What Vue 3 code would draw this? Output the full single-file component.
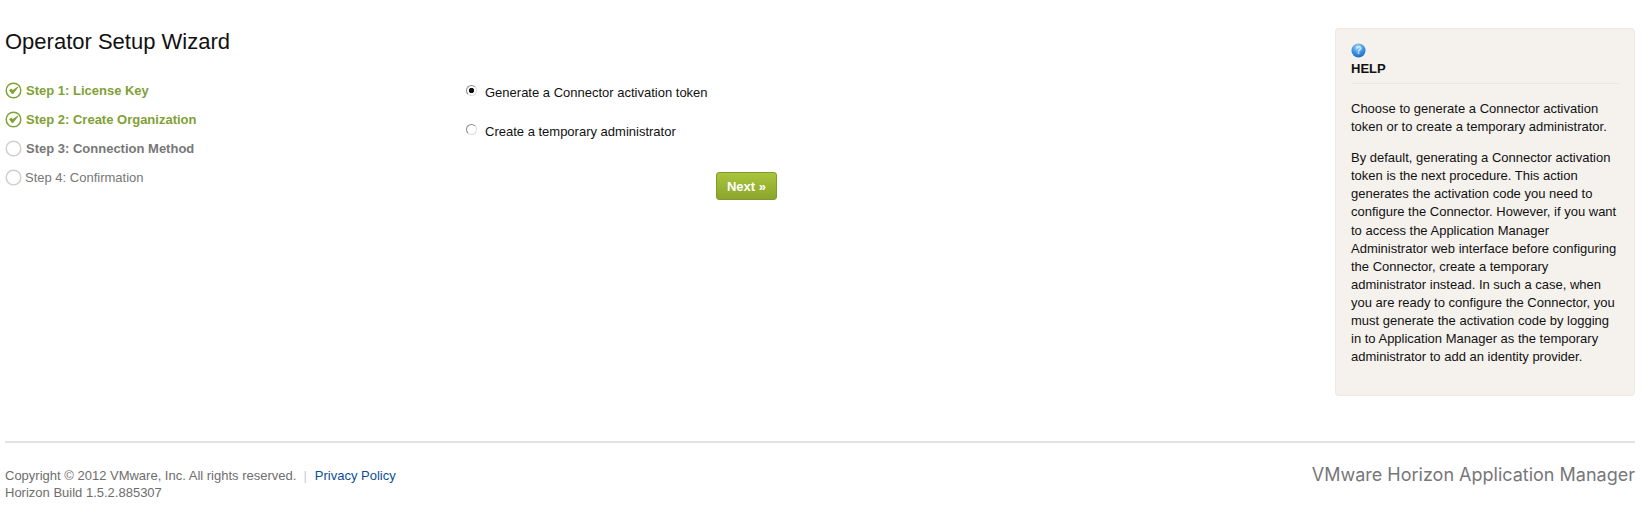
<template>
    <div class="page">
        <div class="main">
            <div class="wizard">
                <h1>Operator Setup Wizard</h1>
                <div class="columns">
                    <!-- STEPS -->
                    <ul class="steps">
                        <li v-for="step in steps" :key="step.label" class="step" :class="step.state">
                            <svg class="stepIcon" width="17" height="17" viewBox="0 0 17 17">
                                <circle cx="8.5" cy="8.5" r="7.3" fill="#fff" stroke-width="1.5" />
                                <path v-if="step.state === 'done'" d="M4.6 8.4 L7.5 12 L13 5 L7.7 8.6 L6.3 7 Z" fill="#7fa136" stroke="#7fa136" stroke-width="1" stroke-linejoin="round" />
                            </svg>
                            <span>{{ step.label }}</span>
                        </li>
                    </ul>
                    <!-- FORM -->
                    <form class="form" @submit.prevent>
                        <label class="option" v-for="o in options" :key="o.value">
                            <input type="radio" name="method" :value="o.value" v-model="method">
                            <span class="radio" :class="{ on: method === o.value }"></span>
                            <span>{{ o.label }}</span>
                        </label>
                        <button class="next" type="submit">Next »</button>
                    </form>
                </div>
            </div>
            <!-- HELP -->
            <aside class="help">
                <svg class="helpIcon" width="15" height="15" viewBox="0 0 15 15">
                    <defs>
                        <radialGradient id="helpBall" cx="45%" cy="25%" r="80%">
                            <stop offset="0" stop-color="#a8d8fb" />
                            <stop offset="0.55" stop-color="#3b93e4" />
                            <stop offset="1" stop-color="#1a62bd" />
                        </radialGradient>
                    </defs>
                    <circle cx="7.5" cy="7.5" r="7" fill="url(#helpBall)" />
                    <text x="7.5" y="11" text-anchor="middle" class="helpMark">?</text>
                </svg>
                <h2>HELP</h2>
                <p class="first">Choose to generate a Connector activation token or to create a temporary administrator.</p>
                <p>By default, generating a Connector activation token is the next procedure. This action generates the activation code you need to configure the Connector. However, if you want to access the Application Manager Administrator web interface before configuring the Connector, create a temporary administrator instead. In such a case, when you are ready to configure the Connector, you must generate the activation code by logging in to Application Manager as the temporary administrator to add an identity provider.</p>
            </aside>
        </div>
        <!-- FOOTER -->
        <footer class="footer">
            <div class="legal">
                <div>Copyright © 2012 VMware, Inc. All rights reserved.<span class="sep">|</span><a href="#">Privacy Policy</a></div>
                <div>Horizon Build 1.5.2.885307</div>
            </div>
            <div class="brand">VMware Horizon Application Manager</div>
        </footer>
    </div>
</template>

<script setup>
import { ref } from 'vue'

const method = ref('token')

const steps = [
    { label: 'Step 1: License Key', state: 'done' },
    { label: 'Step 2: Create Organization', state: 'done' },
    { label: 'Step 3: Connection Method', state: 'current' },
    { label: 'Step 4: Confirmation', state: 'todo' },
]

const options = [
    { value: 'token', label: 'Generate a Connector activation token' },
    { value: 'admin', label: 'Create a temporary administrator' },
]
</script>

<style>
html, body {
    margin: 0;
    background: #fff;
}
</style>

<style scoped>
.page {
    width: 1649px;
    box-sizing: border-box;
    padding: 28px 14px 0 5px;
    font-family: "Liberation Sans", Arial, sans-serif;
    font-size: 12px;
    color: #000;
}

.main {
    display: flex;
    justify-content: space-between;
    align-items: flex-start;
}

.wizard {
    flex: 1;
}

h1 {
    margin: 0;
    padding-top: 1px;
    font-size: 22px;
    font-weight: normal;
    line-height: 26px;
    color: #111;
}

.columns {
    display: flex;
    margin-top: 21px;
}

.steps {
    list-style: none;
    margin: 0;
    padding: 0;
    width: 461px;
}

.step {
    display: flex;
    align-items: center;
    gap: 4px;
    height: 29px;
    font-size: 13px;
    font-weight: bold;
}

.stepIcon {
    flex: none;
}

.done {
    color: #7fa136;
}

.done circle {
    stroke: #7fa136;
}

.current {
    color: #777;
}

.current circle,
.todo circle {
    stroke: #cfcfcf;
}

.todo {
    color: #777;
    font-weight: normal;
    gap: 3px;
}

.form {
    display: flex;
    flex-direction: column;
    width: 311px;
    margin-top: -3px;
}

.option {
    display: flex;
    align-items: center;
    gap: 8px;
    height: 39px;
    font-size: 13px;
    color: #111;
}

.option input {
    display: none;
}

.radio {
    width: 9px;
    height: 9px;
    border-radius: 50%;
    border: 1px solid #8a8a8a;
    border-right-color: #ddd;
    border-bottom-color: #ddd;
    background: #fff;
    position: relative;
    top: -2px;
}

.radio.on {
    background: radial-gradient(circle, #111 0 2.4px, #fff 3px);
}

.next {
    align-self: flex-end;
    width: 61px;
    height: 28px;
    margin-top: 21px;
    padding: 0;
    border: 1px solid #7f9a2e;
    border-radius: 3px;
    background: linear-gradient(#a9c53c, #8ba52c);
    color: #fff;
    font-family: inherit;
    font-size: 13px;
    font-weight: bold;
}

.help {
    width: 300px;
    height: 368px;
    box-sizing: border-box;
    flex: none;
    padding: 14px 15px;
    background: #f5f2ee;
    border: 1px solid #eee8e0;
    border-radius: 4px;
    font-size: 13px;
    line-height: 18.1px;
    color: #111;
}

.helpIcon {
    display: block;
}

.helpMark {
    font-size: 10px;
    font-weight: bold;
    fill: #d8ecfc;
}

h2 {
    margin: 0;
    padding: 3px 0 6px;
    font-size: 13px;
    line-height: 16px;
    color: #111;
    border-bottom: 1px solid #ebe7e1;
}

p {
    margin: 13px 0 0;
}

p.first {
    margin-top: 16px;
}

.footer {
    display: flex;
    justify-content: space-between;
    margin-top: 45px;
    padding-top: 24px;
    border-top: 2px solid #e2e2e2;
    font-size: 13px;
    line-height: 17px;
    color: #6e6e6e;
}

.sep {
    margin: 0 8px 0 7px;
    color: #ccc;
}

.footer a {
    color: #0b4f96;
    text-decoration: none;
}

.brand {
    margin-top: -3px;
    font-family: Inter, sans-serif;
    font-size: 18px;
    line-height: 22px;
    color: #77777a;
}
</style>
